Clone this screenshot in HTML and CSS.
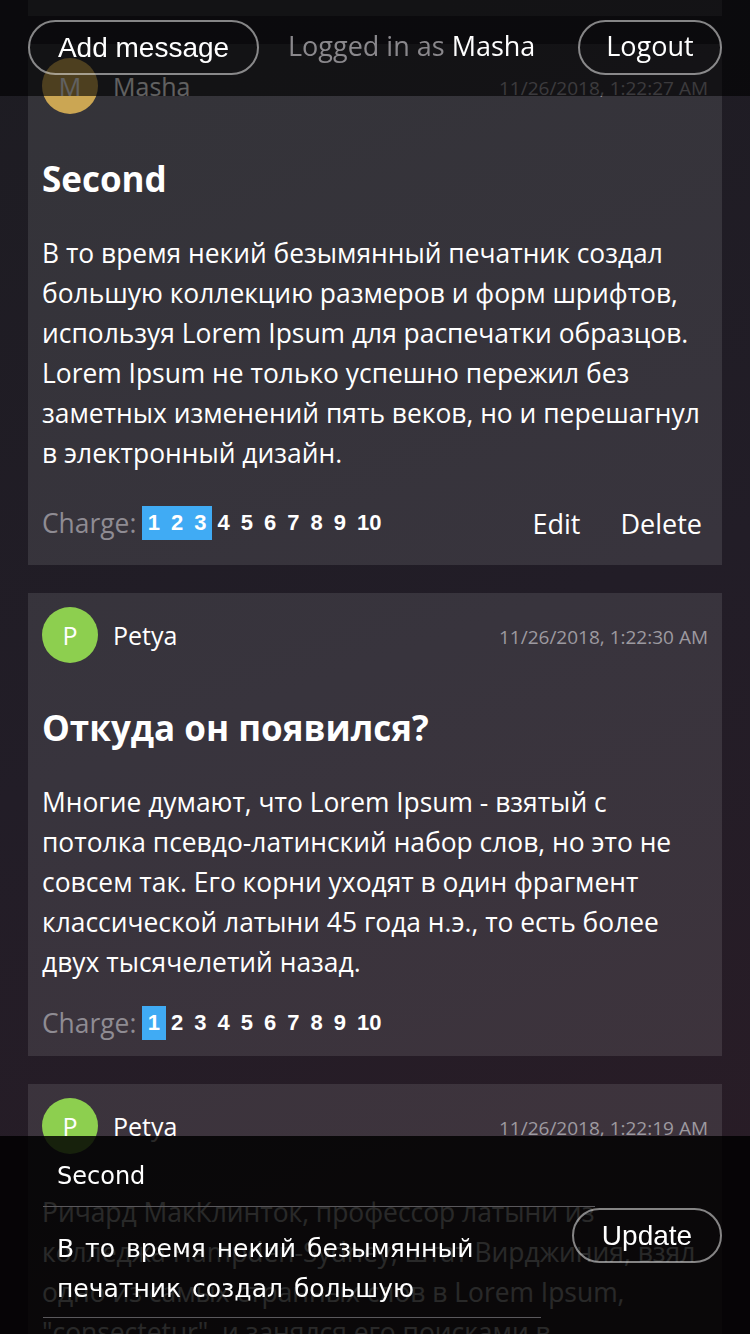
FILE: index.html
```html
<!DOCTYPE html>
<html lang="ru">
<head>
<meta charset="utf-8">
<title>Messages</title>
<link rel="stylesheet" href="styles.css">
</head>
<body>
<header class="topbar">
  <button class="pill pill-arial pill-add">Add message</button>
  <span class="logged">Logged in as <b>Masha</b></span>
  <button class="pill pill-logout">Logout</button>
</header>

<main class="feed">
  <div class="card card-tail"></div>

  <article class="card">
    <div class="card-head">
      <span class="avatar avatar-m">M</span>
      <span class="author">Masha</span>
      <span class="date">11/26/2018, 1:22:27 AM</span>
    </div>
    <h2 class="title">Second</h2>
    <p class="body">В то время некий безымянный печатник создал большую коллекцию размеров и форм шрифтов, используя Lorem Ipsum для распечатки образцов. Lorem Ipsum не только успешно пережил без заметных изменений пять веков, но и перешагнул в электронный дизайн.</p>
    <div class="card-foot foot-actions">
      <span class="charge-label">Charge:</span>
      <span class="charge"><span class="n on">1</span><span class="n on">2</span><span class="n on">3</span><span class="n">4</span><span class="n">5</span><span class="n">6</span><span class="n">7</span><span class="n">8</span><span class="n">9</span><span class="n">10</span></span>
      <span class="actions"><button class="link">Edit</button><button class="link">Delete</button></span>
    </div>
  </article>

  <article class="card">
    <div class="card-head">
      <span class="avatar avatar-p">P</span>
      <span class="author">Petya</span>
      <span class="date">11/26/2018, 1:22:30 AM</span>
    </div>
    <h2 class="title">Откуда он появился?</h2>
    <p class="body">Многие думают, что Lorem Ipsum - взятый с потолка псевдо-латинский набор слов, но это не совсем так. Его корни уходят в один фрагмент классической латыни 45 года н.э., то есть более двух тысячелетий назад.</p>
    <div class="card-foot">
      <span class="charge-label">Charge:</span>
      <span class="charge"><span class="n on">1</span><span class="n">2</span><span class="n">3</span><span class="n">4</span><span class="n">5</span><span class="n">6</span><span class="n">7</span><span class="n">8</span><span class="n">9</span><span class="n">10</span></span>
    </div>
  </article>

  <article class="card">
    <div class="card-head">
      <span class="avatar avatar-p">P</span>
      <span class="author">Petya</span>
      <span class="date">11/26/2018, 1:22:19 AM</span>
    </div>
    <p class="body">Ричард МакКлинток, профессор латыни из колледжа Hampden-Sydney, штат Вирджиния, взял одно из самых странных слов в Lorem Ipsum, "consectetur", и занялся его поисками в классической латинской литературе.</p>
  </article>
</main>

<form class="editor">
  <div class="editor-fields">
    <input class="editor-title" type="text" value="Second">
    <textarea class="editor-text">В то время некий безымянный печатник создал большую коллекцию размеров и форм шрифтов, используя Lorem Ipsum для распечатки образцов.</textarea>
  </div>
  <button type="button" class="pill pill-arial pill-update">Update</button>
</form>
</body>
</html>
```

FILE: styles.css
```css
* { box-sizing: border-box; }

html, body {
  margin: 0;
  height: 100%;
}

body {
  background: linear-gradient(160deg, #1d1c22 0%, #221d27 50%, #2a1c26 100%);
  background-attachment: fixed;
  color: #fff;
  font-family: "Open Sans", "Noto Sans", sans-serif;
  overflow: hidden;
}

/* ---------- top bar ---------- */
.topbar {
  position: fixed;
  top: 0;
  left: 0;
  right: 0;
  height: 96px;
  z-index: 5;
  display: flex;
  align-items: flex-start;
  padding: 20px 28px 0 28px;
  background: rgba(0, 0, 0, 0.62);
}

.pill {
  height: 55px;
  border: 2px solid rgba(255, 255, 255, 0.5);
  border-radius: 28px;
  background: transparent;
  color: #fff;
  font-size: 28px;
  padding: 0;
  cursor: pointer;
}

.pill-arial {
  font-family: "Liberation Sans", Arial, sans-serif;
}

.pill-add { width: 231px; }

.pill-logout {
  font-family: "Open Sans", "Noto Sans", sans-serif;
  font-size: 27px;
  margin-left: auto;
  width: 144px;
  padding-bottom: 4px;
}

.logged {
  margin-left: 29px;
  font-size: 27px;
  line-height: 52px;
  color: #8a888c;
}

.logged b {
  font-weight: 400;
  color: #fff;
}

/* ---------- feed ---------- */
.feed {
  display: flex;
  flex-direction: column;
  gap: 28px;
  padding: 0 28px;
}

.card {
  background: rgba(255, 255, 255, 0.1);
  padding: 14px 14px 12px 14px;
}

.card-tail {
  height: 16px;
  padding: 0;
}

.card-head {
  display: flex;
  align-items: center;
  height: 56px;
}

.avatar {
  width: 56px;
  height: 56px;
  border-radius: 50%;
  display: flex;
  align-items: center;
  justify-content: center;
  font-size: 25px;
  color: #fff;
  flex: none;
}

.avatar-m { background: #cba653; }
.avatar-p { background: #8dcf4f; }

.author {
  margin-left: 15px;
  font-size: 25px;
}

.date {
  margin-left: auto;
  font-size: 19px;
  color: #9d9aa0;
  padding-top: 4px;
}

.title {
  margin: 43px 0 0 0;
  font-size: 35px;
  line-height: 44px;
  font-weight: 700;
}

.body {
  margin: 32px 0 0 0;
  font-size: 26.4px;
  line-height: 40px;
}

.card-head + .body {
  margin-top: 38px;
}

.card-foot {
  display: flex;
  align-items: center;
  min-height: 42px;
  margin-top: 20px;
}

.foot-actions {
  min-height: 60px;
}

.charge-label {
  font-size: 26.4px;
  color: #8f8c93;
  margin-right: 6px;
}

.charge {
  display: flex;
}

.n {
  font-family: "Liberation Sans", Arial, sans-serif;
  font-weight: 700;
  font-size: 22px;
  line-height: 34px;
  padding: 0 5.5px;
}

.n.on {
  background: #40abf4;
}

.actions {
  margin-left: auto;
  display: flex;
}

.link {
  background: none;
  border: none;
  color: #fff;
  font-family: "Open Sans", "Noto Sans", sans-serif;
  font-size: 27px;
  padding: 10px 0;
  margin-right: 6px;
  cursor: pointer;
}

.link + .link { margin-left: 34px; }

/* ---------- bottom editor ---------- */
.editor {
  position: fixed;
  left: 0;
  right: 0;
  bottom: 0;
  height: 198px;
  z-index: 5;
  display: flex;
  align-items: flex-start;
  padding: 10px 28px 0 43px;
  background: rgba(0, 0, 0, 0.84);
}

.editor-fields {
  flex: 0 0 498px;
  min-width: 0;
  display: flex;
  flex-direction: column;
}

.editor-title {
  width: 552px;
  height: 61px;
  background: transparent;
  border: none;
  border-bottom: 1px solid #5a585c;
  color: #fff;
  font-family: "DejaVu Sans", sans-serif;
  font-size: 24px;
  padding: 0 14px;
  outline: none;
}

.editor-text {
  width: 498px;
  height: 111px;
  background: transparent;
  border: none;
  border-bottom: 1px solid #5a585c;
  color: #fff;
  font-family: "DejaVu Sans", sans-serif;
  font-size: 25px;
  line-height: 40px;
  word-spacing: 3px;
  padding: 22px 30px 0 14px;
  resize: none;
  overflow: hidden;
  outline: none;
}

.pill-update {
  margin-left: auto;
  margin-top: 62px;
  width: 150px;
  flex: none;
}
```
